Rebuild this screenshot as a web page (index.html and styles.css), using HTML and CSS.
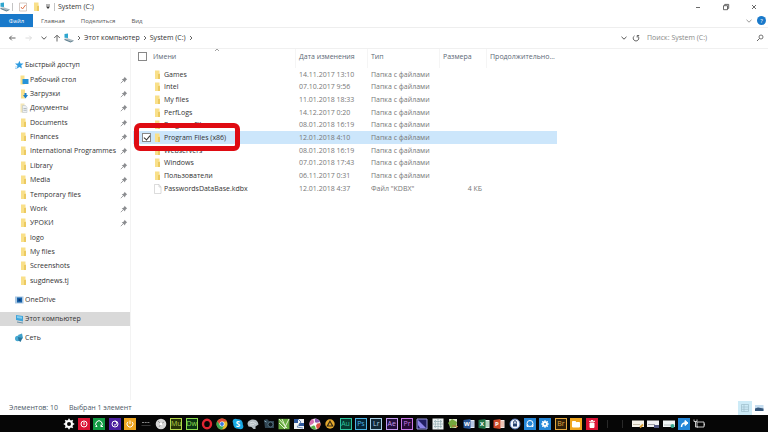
FILE: index.html
```
<!DOCTYPE html>
<html lang="ru">
<head>
<meta charset="utf-8">
<title>System (C:)</title>
<link rel="stylesheet" href="styles.css">
</head>
<body>

<!-- shared icons -->
<svg class="defs" xmlns="http://www.w3.org/2000/svg">
	<symbol id="folder" viewBox="0 0 10 10">
		<path d="M2 0.5h4.500v3h.5v5.500H2z" fill="#f9e08a"/>
		<path d="M5 4h2v5H5z" fill="#ecca62"/>
	</symbol>
	<symbol id="desktop" viewBox="0 0 10 10">
		<path d="M1.500 0.5h4v9h-4z" fill="#f9e08a"/>
		<path d="M3.500 4h6v5h-6z" fill="#2793d8"/>
	</symbol>
	<symbol id="downloads" viewBox="0 0 10 10">
		<path d="M2 0.5h4v9H2z" fill="#f9e08a"/>
		<path d="M5.500 4h2v2h1.500L6.500 9.500 4 6h1.500z" fill="#1d80c8"/>
	</symbol>
	<symbol id="docs" viewBox="0 0 10 10">
		<path d="M1.500 0.5h4v9h-4z" fill="#f3e6b8"/>
		<path d="M3.500 2.500h3l1.500 2v5H3.500z" fill="#eef1f3" stroke="#b4bcc1" stroke-width=".5"/>
		<path d="M4.500 5.500h3M4.500 7.300h3" stroke="#8e9aa2" stroke-width=".6"/>
	</symbol>
	<symbol id="file" viewBox="0 0 10 10">
		<path d="M1.500 0.5h4.500l2 2.500v6.500H1.500zM6 .5V3h2" fill="#fff" stroke="#c4c4c4" stroke-width=".6"/>
	</symbol>
	<symbol id="pin" viewBox="0 0 8 8">
		<path d="M4.500 .8l2.700 2.700-.7.3-1.200 1.300-.3 1.500-3.300-3.300 1.500-.3L4.300 1.700z" fill="#8b8d90"/>
		<path d="M3.300 4.700L.8 7.200" stroke="#8b8d90" stroke-width=".8"/>
	</symbol>
	<symbol id="drive" viewBox="0 0 10 10">
		<path d="M.5 1l3.500-.5v4.500L.5 4.700z" fill="#2fa6cf"/>
		<path d="M.5 5.800l3-.6 6 2-3 1.800z" fill="#aebbc2"/>
		<path d="M.5 5.800l6 2.700 3-1.300v.8l-3 1.500-6-2.500z" fill="#5b7c8c"/>
	</symbol>
	<symbol id="chev" viewBox="0 0 6 6">
		<path d="M2 1l2 2-2 2" fill="none" stroke="#555" stroke-width=".9"/>
	</symbol>
	<symbol id="down" viewBox="0 0 8 8">
		<path d="M1.500 2.800L4 5.200l2.500-2.400" fill="none" stroke="currentColor"/>
	</symbol>
</svg>

<div class="window">
	<header class="titlebar">
		<svg class="icon"><use href="#drive"/></svg>
		<span class="bar"></span>
		<svg class="icon check-icon" viewBox="0 0 10 10"><path d="M1.500 1h7v8h-7z" fill="#fff" stroke="#c4b4ac" stroke-width=".7"/><path d="M3 5l1.500 2L7.500 3" fill="none" stroke="#e0764c"/></svg>
		<svg class="icon"><use href="#folder"/></svg>
		<svg class="icon small" viewBox="0 0 8 8"><path d="M2 2h4" stroke="#444" stroke-width=".8"/><path d="M2 3.500h4L4 6z" fill="#333"/></svg>
		<span class="bar"></span>
		<h1>System (C:)</h1>
		<div class="controls">
			<button aria-label="Свернуть"><svg viewBox="0 0 8 8"><path d="M2 4.500h4" stroke="#444" stroke-width=".8"/></svg></button>
			<button aria-label="Развернуть"><svg viewBox="0 0 8 8"><path d="M1.500 2.700h4v4h-4zM2.700 2.500V1.400h4v4H5.700" fill="none" stroke="#444" stroke-width=".8"/></svg></button>
			<button aria-label="Закрыть"><svg viewBox="0 0 8 8"><path d="M2 2l4 4M6 2L2 6" stroke="#444" stroke-width=".8"/></svg></button>
		</div>
	</header>

	<nav class="ribbon">
		<button class="active">Файл</button>
		<button>Главная</button>
		<button>Поделиться</button>
		<button>Вид</button>
		<div class="help">
			<button aria-label="Развернуть ленту"><svg class="small"><use href="#down"/></svg></button>
			<button aria-label="Справка" class="question">?</button>
		</div>
	</nav>

	<div class="address">
		<button aria-label="Назад"><svg viewBox="0 0 8 8"><path d="M7.500 4h-6M3.800 1.700L1.500 4l2.300 2.300" fill="none" stroke="#555" stroke-width=".9"/></svg></button>
		<button aria-label="Вперёд"><svg viewBox="0 0 8 8"><path d="M.5 4h6M4.200 1.700L6.500 4 4.200 6.300" fill="none" stroke="#d8d8d8" stroke-width=".9"/></svg></button>
		<button aria-label="Последние"><svg><use href="#down"/></svg></button>
		<button aria-label="Вверх"><svg viewBox="0 0 8 8"><path d="M4 7.500v-6M1.200 4L4 1.200 6.800 4" fill="none" stroke="#555" stroke-width=".9"/></svg></button>
		<div class="path">
			<svg class="icon"><use href="#drive"/></svg>
			<svg class="chev"><use href="#chev"/></svg>
			<a href="#">Этот компьютер</a>
			<svg class="chev"><use href="#chev"/></svg>
			<a href="#">System (C:)</a>
			<svg class="chev"><use href="#chev"/></svg>
		</div>
		<button aria-label="История"><svg><use href="#down"/></svg></button>
		<button aria-label="Обновить"><svg viewBox="0 0 8 8"><path d="M2.500 1.800A2.800 2.800 0 1 0 5.500 1.800M5.200 3.500V1.500H7.200" fill="none" stroke="#555" stroke-width=".9"/></svg></button>
		<div class="search">
			<input type="search" aria-label="Поиск" placeholder="Поиск: System (C:)">
			<svg class="small" viewBox="0 0 8 8"><circle cx="5" cy="3" r="2" fill="none" stroke="#555" stroke-width=".8"/><path d="M3.500 4.500L1 7" stroke="#555" stroke-width=".9"/></svg>
		</div>
	</div>

	<div class="content">
		<aside class="sidebar">
			<ul class="quick">
				<li class="root"><svg class="icon" viewBox="0 0 10 10"><path d="M5.500 .8l1 2.700 3 .1-2.300 2 .8 3-2.600-1.600-2.700 1.700.8-3L1 3.600l3.200-.1z" fill="#2e9be0"/><path d="M1 7h2.500M1 8.500h2" stroke="#8cc6ec" stroke-width=".7"/></svg><a href="#">Быстрый доступ</a></li>
				<li><svg class="icon"><use href="#desktop"/></svg><a href="#">Рабочий стол</a><svg class="pin"><use href="#pin"/></svg></li>
				<li><svg class="icon"><use href="#downloads"/></svg><a href="#">Загрузки</a><svg class="pin"><use href="#pin"/></svg></li>
				<li><svg class="icon"><use href="#docs"/></svg><a href="#">Документы</a><svg class="pin"><use href="#pin"/></svg></li>
				<li><svg class="icon"><use href="#folder"/></svg><a href="#">Documents</a><svg class="pin"><use href="#pin"/></svg></li>
				<li><svg class="icon"><use href="#folder"/></svg><a href="#">Finances</a><svg class="pin"><use href="#pin"/></svg></li>
				<li><svg class="icon"><use href="#folder"/></svg><a href="#">International Programmes</a><svg class="pin"><use href="#pin"/></svg></li>
				<li><svg class="icon"><use href="#folder"/></svg><a href="#">Library</a><svg class="pin"><use href="#pin"/></svg></li>
				<li><svg class="icon"><use href="#folder"/></svg><a href="#">Media</a><svg class="pin"><use href="#pin"/></svg></li>
				<li><svg class="icon"><use href="#folder"/></svg><a href="#">Temporary files</a><svg class="pin"><use href="#pin"/></svg></li>
				<li><svg class="icon"><use href="#folder"/></svg><a href="#">Work</a><svg class="pin"><use href="#pin"/></svg></li>
				<li><svg class="icon"><use href="#folder"/></svg><a href="#">УРОКИ</a><svg class="pin"><use href="#pin"/></svg></li>
				<li><svg class="icon"><use href="#folder"/></svg><a href="#">logo</a></li>
				<li><svg class="icon"><use href="#folder"/></svg><a href="#">My files</a></li>
				<li><svg class="icon"><use href="#folder"/></svg><a href="#">Screenshots</a></li>
				<li><svg class="icon"><use href="#folder"/></svg><a href="#">sugdnews.tj</a></li>
			</ul>
			<ul class="places">
				<li class="root"><svg class="icon" viewBox="0 0 10 10"><path d="M1 1.500h8.500v7H1z" fill="#a9c7e2"/><path d="M3 2.500h5v5H3z" fill="#1560a8"/><path d="M4.500 4h2v2h-2z" fill="#0b3a78"/></svg><a href="#">OneDrive</a></li>
				<li class="root current"><svg class="icon" viewBox="0 0 10 10"><path d="M2 1l7 1v5.500L2 6z" fill="#3fa5da"/><path d="M3 2l5 .8v2L3 4z" fill="#85cdf0"/><path d="M3 7.500l6 1v1l-6-1z" fill="#6c8fa3"/></svg><a href="#">Этот компьютер</a></li>
				<li class="root"><svg class="icon" viewBox="0 0 10 10"><path d="M4 2l4-1.500 1 4.500-3 2z" fill="#3e9fc9"/><circle cx="3.700" cy="5.500" r="2.700" fill="#47a9d2"/><path d="M4 4l4.500 1-2 4-2-1.500z" fill="#28749c"/></svg><a href="#">Сеть</a></li>
			</ul>
		</aside>

		<main class="files">
			<table>
				<colgroup><col class="c-check"><col class="c-name"><col class="c-date"><col class="c-type"><col class="c-size"><col class="c-len"></colgroup>
				<thead>
					<tr><th><input type="checkbox" aria-label="Выбрать все"></th><th>Имени<svg class="sort" viewBox="0 0 8 8"><path d="M2 5l2-2 2 2" fill="none" stroke="#888" stroke-width=".8"/></svg></th><th>Дата изменения</th><th>Тип</th><th>Размера</th><th>Продолжительно...</th></tr>
				</thead>
				<tbody>
					<tr><td></td><td><svg class="icon"><use href="#folder"/></svg>Games</td><td>14.11.2017 13:10</td><td>Папка с файлами</td><td></td><td></td></tr>
					<tr><td></td><td><svg class="icon"><use href="#folder"/></svg>Intel</td><td>07.10.2017 9:56</td><td>Папка с файлами</td><td></td><td></td></tr>
					<tr><td></td><td><svg class="icon"><use href="#folder"/></svg>My files</td><td>11.01.2018 18:33</td><td>Папка с файлами</td><td></td><td></td></tr>
					<tr><td></td><td><svg class="icon"><use href="#folder"/></svg>PerfLogs</td><td>14.12.2017 0:20</td><td>Папка с файлами</td><td></td><td></td></tr>
					<tr><td></td><td><svg class="icon"><use href="#folder"/></svg>Program Files</td><td>08.01.2018 16:19</td><td>Папка с файлами</td><td></td><td></td></tr>
					<tr class="selected"><td><input type="checkbox" checked aria-label="Program Files (x86)"><span class="marker"></span></td><td><svg class="icon"><use href="#folder"/></svg>Program Files (x86)</td><td>12.01.2018 4:10</td><td>Папка с файлами</td><td></td><td></td></tr>
					<tr><td></td><td><svg class="icon"><use href="#folder"/></svg>Webservers</td><td>08.01.2018 16:19</td><td>Папка с файлами</td><td></td><td></td></tr>
					<tr><td></td><td><svg class="icon"><use href="#folder"/></svg>Windows</td><td>07.01.2018 17:43</td><td>Папка с файлами</td><td></td><td></td></tr>
					<tr><td></td><td><svg class="icon"><use href="#folder"/></svg>Пользователи</td><td>06.11.2017 0:31</td><td>Папка с файлами</td><td></td><td></td></tr>
					<tr><td></td><td><svg class="icon"><use href="#file"/></svg>PasswordsDataBase.kdbx</td><td>12.01.2018 4:37</td><td>Файл "KDBX"</td><td class="num">4 КБ</td><td></td></tr>
				</tbody>
			</table>
		</main>
	</div>

	<footer class="status">
		<span>Элементов: 10</span>
		<span>Выбран 1 элемент</span>
		<div class="views">
			<button class="on" aria-label="Таблица"><svg viewBox="0 0 12 12"><path d="M2.500 2.500h7v7h-7zM2.500 5h7M2.500 7.300h7M5 2.500v7" fill="none" stroke="#9dbdca" stroke-width=".7"/></svg></button>
			<button aria-label="Крупные значки"><svg viewBox="0 0 12 12"><path d="M2 3h8.500v6H2z" fill="#c4dcef"/><path d="M2 6.500l3-1 5.500 1V9H2z" fill="#35577b"/></svg></button>
		</div>
	</footer>
</div>

<div class="taskbar">
	<svg viewBox="0 0 12 12"><circle cx="6" cy="6" r="3" fill="none" stroke="#fff" stroke-width="2"/><path d="M6 .8v2M6 9.200v2M.8 6h2M9.200 6h2M2.300 2.300l1.500 1.500M8.200 8.200l1.500 1.500M9.700 2.300L8.200 3.800M3.800 8.200L2.300 9.700" stroke="#fff" stroke-width="1.600"/></svg>
	<svg class="red" viewBox="0 0 12 12"><circle cx="6" cy="6" r="3"/><path d="M6 4v3"/></svg>
	<svg class="green" viewBox="0 0 12 12"><path d="M4 8.500A3.200 3.200 0 1 1 8 8.500M8 6.500v2h2M4 8.500H2.500"/></svg>
	<svg class="purple" viewBox="0 0 12 12"><circle cx="6" cy="6" r="3"/><path d="M6 3a2 2 0 0 1-1 4"/></svg>
	<svg class="amber" viewBox="0 0 12 12"><path d="M4 3.800a3 3 0 1 0 4 0M6 2.500V6"/></svg>
	<svg viewBox="0 0 12 12"><path d="M2 4.500h8" stroke="#858585" stroke-dasharray="2 .7"/><path d="M1.500 7.500h9" stroke="#444" stroke-width=".8"/></svg>
	<svg viewBox="0 0 12 12"><circle cx="6" cy="6" r="5.300" fill="#d6d6d6"/><path d="M3 3l3 3 3-2M4 9l2-3" fill="none" stroke="#999"/><circle cx="6" cy="6" r="1.300" fill="#fff"/></svg>
	<span class="app mu">Mu</span>
	<span class="app dw">Dw</span>
	<svg viewBox="0 0 12 12"><ellipse cx="6" cy="6" rx="4" ry="4.300" fill="none" stroke="#e02531" stroke-width="2.400"/></svg>
	<svg viewBox="0 0 12 12"><circle cx="6" cy="6" r="5.500" fill="#e5b92c"/><path d="M1.200 3.300A5.500 5.500 0 0 1 11 3.500H6L4 7z" fill="#dd4939"/><path d="M1.200 3.300A5.500 5.500 0 0 0 6 11.500L8 7.500 4 7z" fill="#3aa757"/><circle cx="6" cy="6" r="2.500" fill="#fff"/><circle cx="6" cy="6" r="1.900" fill="#3a7be0"/></svg>
	<svg class="letter" viewBox="0 0 12 12"><circle cx="6" cy="6" r="4.800" fill="#19a9e4"/><circle cx="3.500" cy="3.500" r="2.800" fill="#19a9e4"/><circle cx="8.500" cy="8.500" r="2.800" fill="#19a9e4"/><text x="6" y="9">S</text></svg>
	<svg viewBox="0 0 12 12"><path d="M.5 6c0-3 3-4.500 5.500-4.500 3 0 5 2 5.500 5L8.500 8.500v2.500H6.500L4.500 9 1.500 8.500z" fill="#b5bfc4"/><path d="M3 5l3-1 3 2M3 7l4-.5" fill="none" stroke="#e2e7ea" stroke-width=".8"/></svg>
	<svg viewBox="0 0 12 12"><path d="M1 2l3-1 2 2h5v7H2z" fill="#304553"/><circle cx="7.500" cy="6.500" r="2.500" fill="#0d171e" stroke="#5f7d8a" stroke-width=".8"/><path d="M1.500 3l2 1" stroke="#8db0c0"/></svg>
	<svg viewBox="0 0 12 12"><path d="M.5 .8h11v10.500H.5z" fill="#65aa3e"/><path d="M1 1l8 9M4 1l4 9M11 1L6.500 10M1 5l6 6" stroke="#e3f2d1" stroke-width="1"/></svg>
	<svg viewBox="0 0 12 12"><path d="M1 1h10v10H1z" fill="#eef2f6"/><path d="M1 1h4v4H1zM6 5h5v3H6z" fill="#2c579c"/><path d="M5 1l3 3-4 5 6 1" fill="none" stroke="#6687b2"/></svg>
	<svg viewBox="0 0 12 12"><circle cx="6" cy="6" r="5.500" fill="#f2f2f2"/><path d="M6 .5A5.500 5.500 0 0 1 11 4L6 5z" fill="#8e58b0"/><path d="M11.400 5A5.500 5.500 0 0 1 8 11L6.500 6z" fill="#e04e43"/><path d="M7 11.400A5.500 5.500 0 0 1 1.500 9L5.500 7z" fill="#55ae43"/><path d="M.7 7.500A5.500 5.500 0 0 1 4 .8L5.500 5z" fill="#d86fb1"/><circle cx="6" cy="6" r="1.800" fill="#fff"/></svg>
	<svg viewBox="0 0 12 12"><circle cx="6" cy="6" r="4.700" fill="#e5a92f"/><path d="M6 3.300L8.700 8H3.300z" fill="none" stroke="#362a12" stroke-width="1.200"/></svg>
	<span class="app au">Au</span>
	<span class="app ps">Ps</span>
	<span class="app lr">Lr</span>
	<span class="app ae">Ae</span>
	<span class="app pr">Pr</span>
	<svg viewBox="0 0 12 12"><path d="M1 1h10v10H1z" fill="#211e63" stroke="#9a98dd"/><path d="M2 2l8 8H4L2 7z" fill="#8d84e8"/></svg>
	<svg viewBox="0 0 12 12"><path d="M.5 .5h11v11H.5z" fill="#edf2f3"/><path d="M6 1v10M1 6h10M3.300 2v8M8.700 2v8M2 3.500h8M2 8.500h8" stroke="#78989e" stroke-width=".7" stroke-dasharray="1.500 .6"/></svg>
	<svg viewBox="0 0 12 12"><path d="M2 1h8v9H3z" fill="#dfe7cf"/><path d="M1 5l4-4 5 3-1 5-5 1z" fill="#74a83d"/><path d="M5 8h5M9 10l2-2" stroke="#b56b38"/></svg>
	<svg class="letter" viewBox="0 0 12 12"><path d="M6 2h5.500v8H6z" fill="#e9eff8"/><path d="M7 4h4M7 6h4M7 8h4" stroke="#6d8fc4" stroke-width=".8"/><path d="M.5 2l7-1v10l-7-1z" fill="#285596"/><text x="4" y="8">W</text></svg>
	<svg class="letter" viewBox="0 0 12 12"><path d="M6 2h5.500v8H6z" fill="#e9f4ed"/><path d="M7 4h4M7 6h4M7 8h4" stroke="#5fa57c" stroke-width=".8"/><path d="M.5 2l7-1v10l-7-1z" fill="#217346"/><text x="4" y="8">X</text></svg>
	<svg class="letter" viewBox="0 0 12 12"><path d="M6 2h5.500v8H6z" fill="#fbece7"/><path d="M8 4h3M8 6h3M8 8h3" stroke="#dd8a70" stroke-width=".8"/><path d="M.5 2l7-1v10l-7-1z" fill="#cc4829"/><text x="4" y="8">P</text></svg>
	<svg viewBox="0 0 12 12"><circle cx="6" cy="6" r="5" fill="#f2f6ff" stroke="#5377b5"/><path d="M4 5.500h4v3H4z" fill="#24406f"/><path d="M4.700 5.500V4a1.300 1.300 0 0 1 2.600 0v1.500" fill="none" stroke="#24406f"/></svg>
	<svg class="blue" viewBox="0 0 12 12"><circle cx="6" cy="5.500" r="3"/><path d="M3 6.500v2h1.500M9 6.500v2H7.500"/></svg>
	<svg class="blue" viewBox="0 0 12 12"><circle cx="6" cy="6" r="2" stroke-width="2"/><path d="M6 2v1M6 9v1M2 6h1M9 6h1M3.200 3.200l.8.8M8 8l.8.8M8.800 3.200L8 4M4 8l-.8.8"/></svg>
	<span class="app br">Br</span>
	<svg class="amber" viewBox="0 0 12 12"><path d="M2.500 3.500h3l1 1h3V9h-7z" fill="#fff"/></svg>
	<svg class="red" viewBox="0 0 12 12"><path d="M4 5h4v4.500H4z" fill="#fff"/><path d="M3 3.300h6M5 2.500h2"/></svg>
	<span class="sep"></span>
	<span class="sep"></span>
	<svg viewBox="0 0 12 12"><path d="M0 2.500h12v6.500H0z" fill="#f5f2e9"/><path d="M1 6.500h7" stroke="#c4bda9"/><path d="M8 9.500l3-3" stroke="#d99f35" stroke-width="1.800"/></svg>
	<svg viewBox="0 0 12 12"><path d="M0 2.500h12v6.500H0z" fill="#f0f0f2"/><path d="M1 6.500h7" stroke="#a5a5aa"/><path d="M7 7h5v3H7z" fill="#515780"/></svg>
	<svg viewBox="0 0 12 12"><path d="M0 2.500h12v6.500H0z" fill="#f1f5f5"/><path d="M1 7h7" stroke="#b5c0c0"/><circle cx="9.500" cy="8" r="2" fill="#39a891"/></svg>
	<svg class="blue" viewBox="0 0 12 12"><path d="M3.500 9c0-3 1-4 4-4" stroke-width="1.500"/><path d="M7 2.500L10 5 7 7.500z" fill="#fff"/></svg>
	<svg viewBox="0 0 12 12"><path d="M4 4h7v5H4zM11.500 5.500v2" fill="none" stroke="#ddd" stroke-width=".9"/><path d="M1 1.500v2h3v-2M2.500 3.500V9H5" fill="none" stroke="#ddd" stroke-width=".9"/></svg>
</div>

</body>
</html>
```
FILE: styles.css
```
* {
	box-sizing: border-box;
}

html, body {
	height: 100%;
}

body {
	margin: 0;
	display: flex;
	flex-direction: column;
	background: #fff;
	color: #333;
	font: 7px/12px "Open Sans", "Noto Sans", sans-serif;
}

a {
	color: inherit;
	text-decoration: none;
}

ul {
	list-style: none;
	margin: 0;
	padding: 0;
}

button {
	display: flex;
	align-items: center;
	justify-content: center;
	padding: 0;
	border: 0;
	background: none;
	color: #555;
	font: inherit;
}

svg {
	flex: none;
	width: 10px;
	height: 10px;
}

.defs {
	position: absolute;
	width: 0;
	height: 0;
}

.small {
	width: 8px;
	height: 8px;
}

.window {
	flex: 1;
	min-height: 0;
	display: flex;
	flex-direction: column;
}

/* title */
.titlebar {
	display: flex;
	align-items: center;
	height: 14px;
	gap: 3px;
}

.titlebar h1 {
	margin: 0;
	font-size: 7px;
	font-weight: normal;
}

.titlebar > .icon:first-child {
	margin-right: -1px;
}

.check-icon {
	margin: 0 1px 0 2px;
}

.bar {
	width: 1px;
	height: 8px;
	background: #c4c4c4;
}

.titlebar .small {
	margin: 0 -1px;
}

.controls {
	margin-left: auto;
	display: flex;
}

.controls button {
	width: 28px;
}

.controls svg {
	width: 8px;
	height: 8px;
}

/* ribbon */
.ribbon {
	display: flex;
	height: 14px;
	border-bottom: 1px solid #eee;
	font-size: 6px;
}

.ribbon > button {
	padding: 0 8px;
}

.ribbon > .active {
	width: 33px;
	background: #1979ca;
	color: #fff;
}

.help {
	margin-left: auto;
	display: flex;
	align-items: center;
	gap: 4px;
	padding-right: 2px;
	color: #999;
}

.help button {
	color: #999;
}

.help .question {
	width: 9px;
	height: 9px;
	border-radius: 50%;
	background: #1979ca;
	color: #fff;
}

/* address */
.address {
	display: flex;
	align-items: center;
	height: 21px;
	padding: 0 4px 0 7px;
	border-bottom: 1px solid #f0f0f0;
	gap: 6px;
}

.address > button {
	width: 9px;
}

.address > button svg {
	width: 8px;
	height: 8px;
}

.address > button:nth-child(2) {
	margin-left: 2px;
}

.address > button:nth-child(4) {
	margin-left: -2px;
}

.path {
	flex: 1;
	display: flex;
	align-items: center;
	gap: 2px;
	margin-left: -3px;
}

.path .chev {
	width: 6px;
	height: 6px;
}

.address > .path ~ button {
	margin-left: -3px;
}

.search {
	display: flex;
	align-items: center;
	width: 121px;
	margin-left: -3px;
}

.search input {
	flex: 1;
	min-width: 0;
	padding: 0 4px;
	border: 0;
	background: none;
	font: inherit;
	outline: 0;
}

.search input::placeholder {
	color: #888;
}

/* folders */
.content {
	flex: 1;
	min-height: 0;
	display: flex;
}

.sidebar {
	width: 131px;
	padding-top: 9px;
	border-right: 1px solid #f3f3f3;
}

.quick {
	display: grid;
	grid-auto-rows: 1fr;
	height: 230px;
}

.sidebar li {
	display: flex;
	align-items: center;
	padding: 0 1px 0 19px;
	white-space: nowrap;
}

.sidebar a {
	padding-left: 1px;
}

.sidebar .root {
	padding-left: 14px;
}

.pin {
	width: 8px;
	height: 8px;
	margin-left: auto;
}

.quick li {
	padding-right: 2px;
}

.places {
	display: grid;
	gap: 5px;
	margin-top: 5px;
}

.places li {
	height: 14px;
}

.places .current {
	background: #d9d9d9;
}

/* file list */
.files {
	flex: 1;
	padding-left: 2px;
}

table {
	width: 424px;
	table-layout: fixed;
	border-collapse: collapse;
}

.c-check {
	width: 20px;
}

.c-name {
	width: 143px;
}

.c-date, .c-type {
	width: 72px;
}

.c-size {
	width: 47px;
}

.c-len {
	width: 70px;
}

th, td {
	padding: 0 0 0 3px;
	text-align: left;
	font-weight: normal;
	white-space: nowrap;
	color: #777;
}

th {
	height: 19px;
	padding-bottom: 4px;
	color: #5b6876;
}

th:nth-child(n + 3) {
	box-shadow: -1px 0 #f5f5f5;
}

td {
	height: 12px;
}

tbody tr:nth-child(3n), tbody tr:nth-child(3n + 1) {
	height: 13px;
}

th:first-child {
	padding-left: 5px;
}

td:first-child {
	position: relative;
	padding-left: 9px;
}

th:nth-child(2) {
	position: relative;
	padding-left: 0;
}

td:nth-child(2) {
	padding-left: 0;
	color: #333;
}

td .icon {
	margin-right: 1px;
	vertical-align: middle;
}

.sort {
	position: absolute;
	top: -3px;
	left: 60px;
	width: 8px;
	height: 8px;
}

td.num {
	padding-right: 5px;
	text-align: right;
}

input[type=checkbox] {
	appearance: none;
	display: block;
	width: 9px;
	height: 9px;
	margin: 0;
	border: 1px solid #888;
	background: #fff;
}

input[type=checkbox]:checked::before {
	content: "";
	display: block;
	width: 3px;
	height: 5px;
	margin-left: 2px;
	border: solid #333;
	border-width: 0 1px 1px 0;
	transform: rotate(40deg);
}

.selected {
	background: #cce6fb;
}

/* red frame round the selected folder */
.marker {
	position: absolute;
	top: -8px;
	left: 1px;
	width: 106px;
	height: 28px;
	border: 5px solid #df0b12;
	border-radius: 6px;
	z-index: 1;
}

/* status */
.status {
	display: flex;
	align-items: center;
	height: 15px;
	padding: 0 2px 0 9px;
	gap: 11px;
	color: #4c5866;
}

.views {
	display: flex;
	margin-left: auto;
}

.views button {
	width: 14px;
	height: 14px;
}

.views .on {
	background: #cdebf7;
}

.views svg {
	width: 12px;
	height: 12px;
}

/* taskbar */
.taskbar {
	display: grid;
	grid-template-columns: repeat(42, 1fr);
	align-items: center;
	justify-items: center;
	height: 17px;
	padding: 0 61px;
	background: #060606;
}

.taskbar svg {
	width: 12px;
	height: 12px;
}

.taskbar .red, .taskbar .green, .taskbar .purple, .taskbar .amber, .taskbar .blue {
	fill: none;
	stroke: #fff;
}

.taskbar .red {
	background: #dc1435;
}

.taskbar .green {
	background: #119b43;
}

.taskbar .purple {
	background: #4c20a0;
}

.taskbar .amber {
	background: #efa51f;
}

.taskbar .blue {
	background: #2587d8;
}

.letter text {
	fill: #fff;
	font-size: 6px;
	font-weight: bold;
	text-anchor: middle;
}

.letter circle ~ text {
	font-size: 8px;
}

.app {
	display: flex;
	justify-content: center;
	width: 12px;
	height: 12px;
	border: 1px solid;
	font-size: 7px;
	line-height: 9px;
}

.mu {
	background: #273407;
	color: #b4d64a;
}

.dw {
	background: #0a3513;
	color: #8ddb4f;
}

.au {
	background: #063a32;
	color: #2cc49e;
}

.ps {
	background: #062638;
	color: #4db4e4;
}

.lr {
	background: #122836;
	color: #a9d0e6;
}

.ae {
	background: #23103f;
	color: #c49cf0;
}

.pr {
	background: #280b37;
	color: #c878e8;
}

.br {
	background: #302009;
	color: #e4a840;
}

.sep {
	width: 1px;
	height: 8px;
	background: #292929;
}
```
